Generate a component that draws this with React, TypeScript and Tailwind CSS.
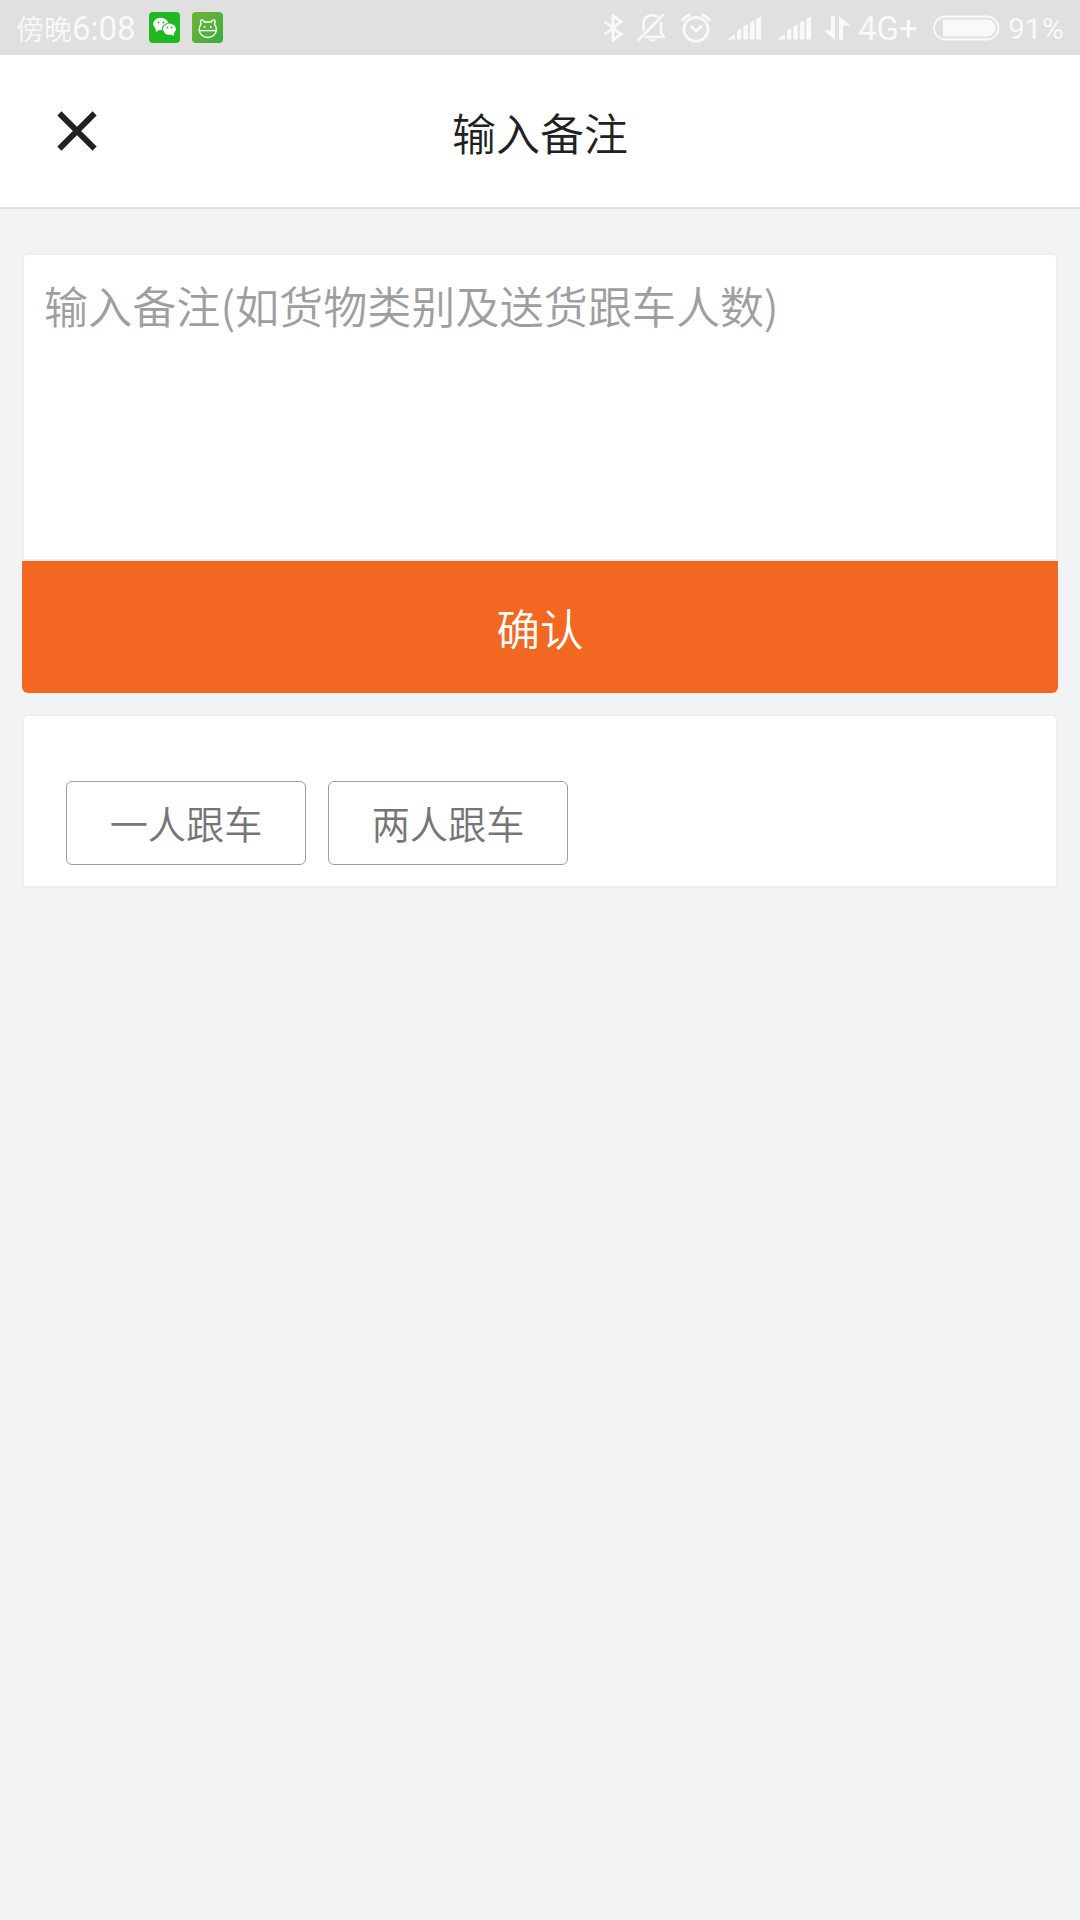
const tags = ["一人跟车", "两人跟车"];

const WechatIcon = () => (
  <svg width="31" height="31" viewBox="0 0 31 31">
    <rect width="31" height="31" rx="4" fill="#20b820" />
    <ellipse cx="11.7" cy="12" rx="7.4" ry="6.2" fill="#fff" />
    <path d="M6.5 15.5 L7 20 L11 17.5Z" fill="#fff" />
    <ellipse cx="20.3" cy="17" rx="7.2" ry="6.3" fill="#20b820" />
    <ellipse cx="20.5" cy="17.2" rx="6.4" ry="5.6" fill="#fff" />
    <path d="M21 22 L24.8 24 L24.8 20Z" fill="#fff" />
    <circle cx="9.5" cy="10.4" r="1" fill="#20b820" />
    <circle cx="14.5" cy="10.4" r="1" fill="#20b820" />
    <circle cx="18.4" cy="15.6" r="0.9" fill="#20b820" />
    <circle cx="22.6" cy="15.6" r="0.9" fill="#20b820" />
  </svg>
);

const PetIcon = () => (
  <svg
    width="31"
    height="31"
    viewBox="0 0 31 31"
    fill="none"
    stroke="#fff"
    strokeWidth="1.4"
  >
    <defs>
      <linearGradient id="pet" x1="0" y1="0" x2="1" y2="1">
        <stop offset="0" stopColor="#6fb536" />
        <stop offset="1" stopColor="#3aad40" />
      </linearGradient>
    </defs>
    <rect width="31" height="31" rx="4" fill="url(#pet)" stroke="none" />
    <path d="M9.3 12 C7.8 10 8.4 7.9 9.9 7.9 C11.3 7.9 12 8.8 12.4 10 H19.2 C19.6 8.8 20.3 7.9 21.7 7.9 C23.2 7.9 23.8 10 22.3 12" />
    <path d="M9.3 12 A8.6 8.2 0 1 0 22.3 12" />
    <path d="M7.4 18.6 H24.2" />
    <path d="M11.8 14.8h1.7 M18 14.8h1.7" strokeWidth="1.7" />
  </svg>
);

const Signal = () => (
  <svg width="34" height="24" viewBox="0 0 34 24" fill="#f9f9f9">
    <path d="M0 23.5 L8 18 V23.5Z M10 14.5 L14.3 12.5 V23.5 H10Z M16.4 10.3 L20.8 8.3 V23.5 H16.4Z M22.8 6.7 L27.4 4.6 V23.5 H22.8Z M29.2 3 L34 0.5 V23.5 H29.2Z" />
  </svg>
);

const StatusBar = () => (
  <div className="flex h-[55px] items-center bg-[#e0e0e0] pl-4 text-[#f9f9f9]">
    <p className="w-[133px] whitespace-nowrap pt-0.5 text-[28px] leading-none">
      傍晚
      <span className="font-[Roboto,sans-serif] text-[33px] font-normal">
        6:08
      </span>
    </p>
    <WechatIcon />
    <div className="ml-3">
      <PetIcon />
    </div>
    <svg
      className="ml-[380px]"
      width="20"
      height="30"
      viewBox="0 0 20 30"
      fill="none"
      stroke="#f9f9f9"
      strokeWidth="2.8"
    >
      <path d="M1.8 8.5 L18 21.3 L10 27 V3 L18 8.5 L1.8 21.3" />
    </svg>
    <svg
      className="ml-3.5"
      width="29"
      height="30"
      viewBox="0 0 29 30"
      fill="none"
      stroke="#f9f9f9"
      strokeWidth="2.6"
    >
      <path d="M1 27.5 L26.5 1.5" />
      <path d="M21 4.2 C14 -0.5 6.5 4 6.5 11 V18 M24 9 V19 L26.5 24 H8" />
      <path d="M11 26.2 Q15.5 30.8 20 26.2Z" fill="#f9f9f9" stroke="none" />
    </svg>
    <svg
      className="ml-[15px]"
      width="30"
      height="30"
      viewBox="0 0 30 30"
      fill="none"
      stroke="#f9f9f9"
      strokeWidth="2.8"
    >
      <circle cx="15" cy="16.3" r="12" />
      <path d="M9.5 12.8 L15 17.8 L21 12.8" />
      <path d="M1.3 8 Q3.5 3.5 9.3 1.8 M28.7 8 Q26.5 3.5 20.7 1.8" strokeWidth="3" />
    </svg>
    <div className="ml-4 flex gap-4">
      <Signal />
      <Signal />
    </div>
    <svg
      className="ml-[13px]"
      width="26"
      height="26"
      viewBox="0 0 26 26"
      fill="#f9f9f9"
    >
      <path d="M7 1 h4 v24 L0 15.5 H7Z M15 25 h4 V10.5 H26 L15 1Z" />
    </svg>
    <p className="ml-2 w-[75px] whitespace-nowrap pt-0.5 font-[Roboto,sans-serif] text-[33px] font-normal leading-none">
      4G+
    </p>
    <svg width="67" height="26" viewBox="0 0 67 26">
      <rect
        x="1"
        y="1.5"
        width="64.5"
        height="23"
        rx="11.5"
        fill="none"
        stroke="#f9f9f9"
        strokeWidth="1.8"
      />
      <path d="M10 4.5 H54 A8.5 8.5 0 0 1 54 21.5 H10Z" fill="#f9f9f9" />
    </svg>
    <p className="ml-2 whitespace-nowrap pt-0.5 font-[Roboto,sans-serif] text-[30px] font-normal leading-none">
      91%
    </p>
  </div>
);

const App = () => {
  return (
    <div className="min-h-[1920px] w-full bg-[#f2f3f5] font-['Noto_Sans_CJK_SC',sans-serif] font-[350]">
      <StatusBar />
      <header className="grid h-[154px] grid-cols-[1fr_auto_1fr] items-center border-b-2 border-[#e0e1e2] bg-white">
        <button className="ml-[57px] w-10" aria-label="关闭">
          <svg
            width="40"
            height="40"
            viewBox="0 0 40 40"
            stroke="#212121"
            strokeWidth="5.8"
          >
            <path d="M2.4 2.4 L37.6 37.6 M37.6 2.4 L2.4 37.6" />
          </svg>
        </button>
        <h1 className="pt-0.5 text-[44px] leading-none text-[#212121]">
          输入备注
        </h1>
      </header>

      <main className="px-[22px] pt-11">
        <textarea
          className="block h-[308px] w-full resize-none rounded-t-md border-2 border-[#edeeef] bg-white px-5 pt-[18px] text-[44.1px] leading-[64px] outline-none placeholder:text-[#9e9e9e] placeholder:opacity-100"
          placeholder="输入备注(如货物类别及送货跟车人数)"
        />
        <button className="block h-[132px] w-full rounded-b-md bg-[#f26722] pt-0.5 text-[43.5px] text-white">
          确认
        </button>

        <div className="mt-[21px] flex h-[174px] gap-[22px] rounded-t-md border-2 border-[#edeeef] bg-white px-[42px] pt-[65px]">
          {tags.map((tag) => (
            <button
              key={tag}
              className="h-[84px] w-60 rounded-md border border-[#9e9e9e] pt-px text-[38.2px] leading-none text-[#757575]"
            >
              {tag}
            </button>
          ))}
        </div>
      </main>
    </div>
  );
};

export default App;
